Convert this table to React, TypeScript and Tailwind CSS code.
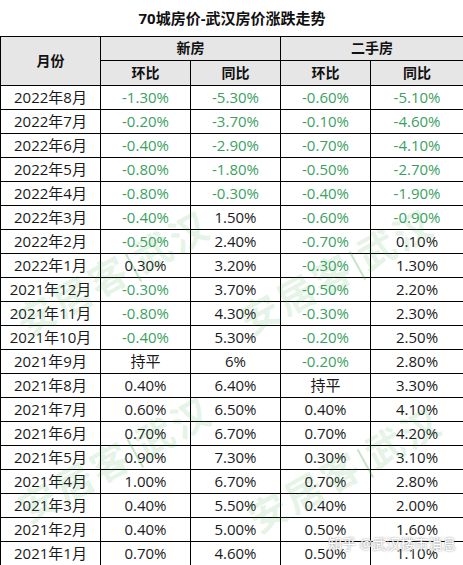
const rows: [string, string, string, string, string][] = [
  ["2022年8月", "-1.30%", "-5.30%", "-0.60%", "-5.10%"],
  ["2022年7月", "-0.20%", "-3.70%", "-0.10%", "-4.60%"],
  ["2022年6月", "-0.40%", "-2.90%", "-0.70%", "-4.10%"],
  ["2022年5月", "-0.80%", "-1.80%", "-0.50%", "-2.70%"],
  ["2022年4月", "-0.80%", "-0.30%", "-0.40%", "-1.90%"],
  ["2022年3月", "-0.40%", "1.50%", "-0.60%", "-0.90%"],
  ["2022年2月", "-0.50%", "2.40%", "-0.70%", "0.10%"],
  ["2022年1月", "0.30%", "3.20%", "-0.30%", "1.30%"],
  ["2021年12月", "-0.30%", "3.70%", "-0.50%", "2.20%"],
  ["2021年11月", "-0.80%", "4.30%", "-0.30%", "2.30%"],
  ["2021年10月", "-0.40%", "5.30%", "-0.20%", "2.50%"],
  ["2021年9月", "持平", "6%", "-0.20%", "2.80%"],
  ["2021年8月", "0.40%", "6.40%", "持平", "3.30%"],
  ["2021年7月", "0.60%", "6.50%", "0.40%", "4.10%"],
  ["2021年6月", "0.70%", "6.70%", "0.70%", "4.20%"],
  ["2021年5月", "0.90%", "7.30%", "0.30%", "3.10%"],
  ["2021年4月", "1.00%", "6.70%", "0.70%", "2.80%"],
  ["2021年3月", "0.40%", "5.50%", "0.40%", "2.00%"],
  ["2021年2月", "0.40%", "5.00%", "0.50%", "1.60%"],
  ["2021年1月", "0.70%", "4.60%", "0.50%", "1.10%"],
];

const Cell = ({ value }: { value: string }) => (
  <td
    className={`h-6 border border-black p-0 text-center ${
      value.startsWith("-") ? "text-[#3c9f62]" : "text-[#1a1a1a]"
    }`}
  >
    {value}
  </td>
);

// diagonal green stamp, as in the source picture
const Stamp = ({ className }: { className: string }) => (
  <span
    className={`pointer-events-none absolute -rotate-[29deg] whitespace-nowrap text-[38px] font-bold tracking-[3px] text-[#3aa84a]/15 ${className}`}
  >
    安居客<span className="mx-1 inline-block h-8 w-[2px] bg-[#3aa84a]/30 align-middle" />武汉
  </span>
);

export default function App() {
  return (
    <div className="relative h-[565px] w-[463px] overflow-hidden bg-white font-['Open_Sans','Noto_Sans_CJK_SC',sans-serif] text-[15px] leading-none">
      <table className="w-[463px] table-fixed border-collapse">
        <colgroup>
          <col className="w-[100px]" />
          <col className="w-[90px]" />
          <col className="w-[90px]" />
          <col className="w-[90px]" />
          <col className="w-[93px]" />
        </colgroup>
        <thead>
          <tr>
            <th
              colSpan={5}
              className="h-9 border-b border-black pt-0.5 text-center text-[15px] font-bold text-[#111]"
            >
              70城房价-武汉房价涨跌走势
            </th>
          </tr>
          <tr className="bg-[#e6e6e6] text-[14px] font-bold text-[#111]">
            <th rowSpan={2} className="border border-black">
              月份
            </th>
            <th colSpan={2} className="h-6 border border-black">
              新房
            </th>
            <th colSpan={2} className="h-6 border border-black">
              二手房
            </th>
          </tr>
          <tr className="bg-[#e6e6e6] text-[14px] font-bold text-[#111]">
            <th className="h-[25px] border border-black">环比</th>
            <th className="h-[25px] border border-black">同比</th>
            <th className="h-[25px] border border-black">环比</th>
            <th className="h-[25px] border border-black">同比</th>
          </tr>
        </thead>
        <tbody>
          {rows.map((r) => (
            <tr key={r[0]}>
              <td className="h-6 border border-black p-0 text-center text-[#1a1a1a]">{r[0]}</td>
              <Cell value={r[1]} />
              <Cell value={r[2]} />
              <Cell value={r[3]} />
              <Cell value={r[4]} />
            </tr>
          ))}
        </tbody>
      </table>

      <Stamp className="left-[6px] top-[254px]" />
      <Stamp className="left-[230px] top-[252px]" />
      <Stamp className="left-[8px] top-[440px]" />
      <Stamp className="left-[238px] top-[450px]" />

      <span className="pointer-events-none absolute left-[328px] top-[537px] whitespace-nowrap text-[14px] text-white [text-shadow:0_0_2px_#777]">
        知乎 @武汉楼市消息
      </span>
    </div>
  );
}
